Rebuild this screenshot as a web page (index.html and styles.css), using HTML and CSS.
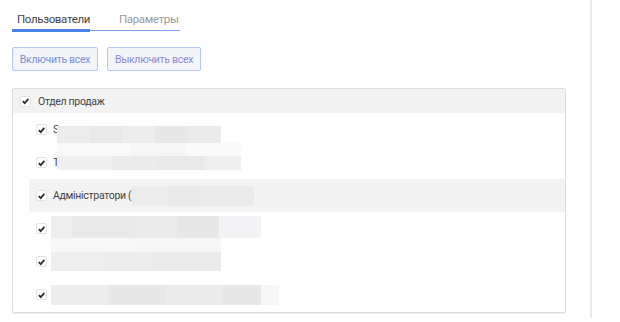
FILE: index.html
```html
<!DOCTYPE html>
<html lang="ru">
<head>
<meta charset="utf-8">
<link rel="stylesheet" href="styles.css">
</head>
<body>
<div class="page">
  <div class="content">
    <div class="tabs">
      <div class="tab active">Пользователи</div>
      <div class="tab">Параметры</div>
    </div>
    <div class="actions">
      <button class="btn">Включить всех</button>
      <button class="btn btn-off">Выключить всех</button>
    </div>
    <div class="panel">
      <div class="group-head">
        <span class="cb"><svg viewBox="0 0 10 10"><path d="M2 5.2 L4.1 7.3 L8.2 2.6" /></svg></span>
        <span class="label">Отдел продаж</span>
      </div>
      <div class="row">
        <span class="cb"><svg viewBox="0 0 10 10"><path d="M2 5.2 L4.1 7.3 L8.2 2.6" /></svg></span>
        <span class="label">S</span>
        <span class="blur b1"><i class="s1"></i><i class="s2"></i></span>
      </div>
      <div class="row">
        <span class="cb"><svg viewBox="0 0 10 10"><path d="M2 5.2 L4.1 7.3 L8.2 2.6" /></svg></span>
        <span class="label">T</span>
        <span class="blur b2"><i class="s3"></i></span>
      </div>
      <div class="row hl">
        <span class="cb"><svg viewBox="0 0 10 10"><path d="M2 5.2 L4.1 7.3 L8.2 2.6" /></svg></span>
        <span class="label">Адміністратори (</span>
        <span class="blur b3"><i class="s4"></i></span>
      </div>
      <div class="row">
        <span class="cb"><svg viewBox="0 0 10 10"><path d="M2 5.2 L4.1 7.3 L8.2 2.6" /></svg></span>
        <span class="blur b4"><i class="s5"></i><i class="s6"></i></span>
      </div>
      <div class="row">
        <span class="cb"><svg viewBox="0 0 10 10"><path d="M2 5.2 L4.1 7.3 L8.2 2.6" /></svg></span>
        <span class="blur b5"><i class="s7"></i></span>
      </div>
      <div class="row">
        <span class="cb"><svg viewBox="0 0 10 10"><path d="M2 5.2 L4.1 7.3 L8.2 2.6" /></svg></span>
        <span class="blur b6"><i class="s8"></i></span>
      </div>
    </div>
  </div>
  <div class="side"></div>
</div>
</body>
</html>
```

FILE: styles.css
```css
* { box-sizing: border-box; }
html, body { margin: 0; padding: 0; background: #fff; }
body {
  font-family: Roboto, "Noto Sans", sans-serif;
  font-size: 10.5px;
  color: #444;
}
.page {
  display: flex;
  width: 620px;
  height: 322px;
}
.content {
  width: 592px;
  height: 318px;
  border-right: 2px solid #e8e8e8;
  padding: 9px 24px 0 12px;
}
.side { flex: 1; }

.tabs {
  display: flex;
  gap: 22px;
  width: 168px;
  border-bottom: 1px solid #7ea2ec;
  height: 22px;
}
.tab {
  padding: 0 5px;
  font-size: 11.5px;
  line-height: 20px;
  letter-spacing: -0.35px;
  color: #9a9a9a;
  white-space: nowrap;
}
.tab.active {
  color: #444;
  border-bottom: 3px solid #4c82e6;
  height: 23px;
  width: 78px;
}
.tab + .tab { padding-left: 7px; }

.actions {
  display: flex;
  gap: 9px;
  margin-top: 16px;
}
.btn {
  height: 24px;
  padding: 0;
  border: 1px solid #b3c7f3;
  border-radius: 2px;
  background: #f4f5f8;
  color: #7290d9;
  font-family: Roboto, "Noto Sans", sans-serif;
  font-size: 10.5px;
  letter-spacing: -0.3px;
  white-space: nowrap;
  width: 86px;
}
.btn-off { width: 94px; color: #8a8cd4; }

.panel {
  margin-top: 17px;
  border: 1px solid #dcdcdc;
  border-radius: 2px;
  height: 225px;
  background: #fff;
  box-shadow: 0 1px 0 #ececec;
}
.group-head {
  display: flex;
  align-items: center;
  height: 24px;
  background: #f3f3f3;
  padding-left: 7px;
  gap: 7px;
}
.row {
  display: flex;
  align-items: center;
  height: 33px;
  margin-left: 16px;
  padding-left: 7px;
  gap: 6px;
}
.row.hl { background: #f3f3f3; }
.cb {
  width: 11px;
  height: 11px;
  border: 1px solid #e2e2e2;
  border-radius: 2px;
  background: #fff;
  display: flex;
  align-items: center;
  justify-content: center;
  flex: none;
}
.cb svg { width: 10px; height: 10px; }
.cb path { fill: none; stroke: #2f2f33; stroke-width: 2; }
.label { white-space: nowrap; letter-spacing: -0.3px; }

.blur { position: relative; display: block; height: 20px; flex: none; }
.blur i { position: absolute; display: block; }
.b1 { width: 186px; height: 18px; margin-left: -8px; margin-top: 10px; }
.b1 .s1 { left: 0; top: 0; width: 164px; height: 17px;
  background: linear-gradient(90deg, #ececec 0 20%, #e9e9e9 20% 40%, #ededed 40% 60%, #e7e7e7 60% 80%, #ebebeb 80%); }
.b1 .s2 { left: 0; top: 17px; width: 184px; height: 20px;
  background: linear-gradient(90deg, #f9f9f9 0 40%, #f6f6f6 40% 70%, #fafafa 70%); }
.b2 { width: 186px; height: 14px; margin-left: -8px; }
.b2 .s3 { left: 0; top: 0; width: 184px; height: 14px;
  background: linear-gradient(90deg, #efefef 0 30%, #ebebeb 30% 55%, #e9e9e9 55% 80%, #eeeeee 80%); }
.b3 { width: 122px; height: 20px; margin-left: -5px; }
.b3 .s4 { left: 0; top: 0; width: 122px; height: 20px;
  background: linear-gradient(90deg, #ececec 0 30%, #e9e9e9 30% 55%, #ebebeb 55% 80%, #eaeaea 80%); }
.b4 { width: 210px; height: 22px; margin-left: -2px; margin-top: 4px; }
.b4 .s5 { left: 0; top: -4px; width: 210px; height: 22px;
  background: linear-gradient(90deg, #efefef 0 10%, #e9e9e9 10% 40%, #ebebeb 40% 60%, #e7e7e7 60% 80%, #f4f4f6 80%); }
.b4 .s6 { left: 0; top: 18px; width: 170px; height: 20px;
  background: linear-gradient(90deg, #f8f8f8 0 50%, #f6f6f6 50%); }
.b5 { width: 170px; height: 19px; margin-left: -2px; }
.b5 .s7 { left: 0; top: 0; width: 170px; height: 19px;
  background: linear-gradient(90deg, #eeeeee 0 30%, #ededed 30% 60%, #eaeaea 60%); }
.b6 { width: 228px; height: 20px; margin-left: -2px; }
.b6 .s8 { left: 0; top: 0; width: 228px; height: 20px;
  background: linear-gradient(90deg, #ededed 0 25%, #e8e8e8 25% 50%, #ebebeb 50% 75%, #e8e8e8 75% 92%, #f6f6f6 92%); }
```
